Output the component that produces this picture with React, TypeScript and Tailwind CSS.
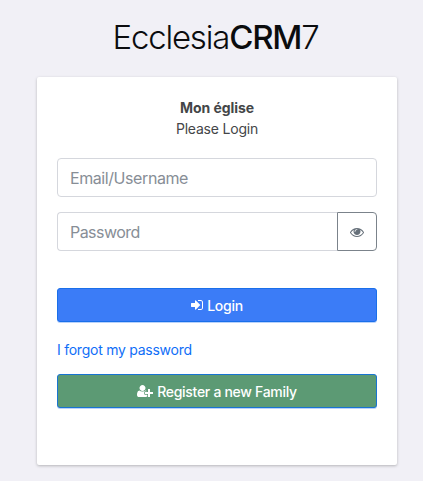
import React from "react";

function SignInIcon() {
  return (
    <svg viewBox="0 0 1536 1792" className="h-[14px] w-[12px] shrink-0" fill="currentColor" aria-hidden="true">
      <path d="M1184 896q0 26-19 45l-544 544q-19 19-45 19t-45-19-19-45v-288h-448q-26 0-45-19t-19-45v-384q0-26 19-45t45-19h448v-288q0-26 19-45t45-19 45 19l544 544q19 19 19 45zm352-352v704q0 119-84.5 203.5t-203.5 84.5h-320q-13 0-22.5-9.5t-9.5-22.5q0-4-1-20t-.5-26.5 3-23.5 10-19.5 20.5-6.5h320q66 0 113-47t47-113v-704q0-66-47-113t-113-47h-312l-11.5-1-11.5-3-8-5.5-7-9-2-13.5q0-4-1-20t-.5-26.5 3-23.5 10-19.5 20.5-6.5h320q119 0 203.5 84.5t84.5 203.5z" />
    </svg>
  );
}

function EyeIcon() {
  return (
    <svg viewBox="0 0 1792 1792" className="h-[14px] w-[14px]" fill="currentColor" aria-hidden="true">
      <path d="M1664 960q-152-236-381-353 61 104 61 225 0 185-131.5 316.5t-316.5 131.5-316.5-131.5-131.5-316.5q0-121 61-225-229 117-381 353 133 205 333.5 326.5t434.5 121.5 434.5-121.5 333.5-326.5zm-720-384q0-20-14-34t-34-14q-125 0-214.5 89.5t-89.5 214.5q0 20 14 34t34 14 34-14 14-34q0-86 61-147t147-61q20 0 34-14t14-34zm848 384q0 34-20 69-140 230-376.5 368.5t-499.5 138.5-499.5-139-376.5-368q-20-35-20-69t20-69q140-229 376.5-368t499.5-139 499.5 139 376.5 368q20 35 20 69z" />
    </svg>
  );
}

function UserPlusIcon() {
  return (
    <svg viewBox="0 0 2048 1792" className="h-[14px] w-[16px] shrink-0" fill="currentColor" aria-hidden="true">
      <path d="M704 896q-159 0-271.5-112.5t-112.5-271.5 112.5-271.5 271.5-112.5 271.5 112.5 112.5 271.5-112.5 271.5-271.5 112.5zm960 128h352q13 0 22.5 9.5t9.5 22.5v192q0 13-9.5 22.5t-22.5 9.5h-352v352q0 13-9.5 22.5t-22.5 9.5h-192q-13 0-22.5-9.5t-9.5-22.5v-352h-352q-13 0-22.5-9.5t-9.5-22.5v-192q0-13 9.5-22.5t22.5-9.5h352v-352q0-13 9.5-22.5t22.5-9.5h192q13 0 22.5 9.5t9.5 22.5v352zm-736 224q0 52 38 90t90 38h256v238q-68 50-171 50h-874q-121 0-194-69t-73-190q0-53 3.5-103.5t14-109 26.5-108.5 43-97.5 62-81 85.5-53.5 111.5-20q19 0 39 17 79 61 154.5 91.5t164.5 30.5 164.5-30.5 154.5-91.5q20-17 39-17 132 0 217 96h-223q-52 0-90 38t-38 90v192z" />
    </svg>
  );
}

export default function App() {
  return (
    <div className="flex min-h-screen flex-col bg-[#f1f0f6] pl-[37px] pr-[26px] pt-[13px] font-['Inter',sans-serif] text-[#212529]">
      <h1 className="h-[50px] whitespace-nowrap pr-[3px] text-center text-[33px] font-light leading-[48px] tracking-[-1.2px] text-[#0b0c0e]">
        Ecclesia<b className="font-medium">CRM</b>7
      </h1>
      <main className="mt-[14px] flex h-[388px] flex-col rounded-[2px] bg-white px-5 pt-5 shadow-[0_1px_3px_rgba(0,0,0,0.25)]">
        <p className="text-center text-[14px] leading-[21px] tracking-[-0.2px] text-[#444648]">
          <b className="font-bold tracking-[-0.05px]">Mon église</b>
          <br />
          Please Login
        </p>
        <input
          placeholder="Email/Username"
          className="mt-[19px] h-[39px] w-full rounded-[4px] border border-[#d5d7dd] px-3 text-[16px] tracking-[-0.42px] outline-none placeholder:text-[#878e96]"
        />
        <div className="mt-[15px] flex h-[39px]">
          <input
            placeholder="Password"
            className="min-w-0 flex-1 rounded-l-[4px] border border-r-0 border-[#d5d7dd] px-3 text-[16px] tracking-[-0.55px] outline-none placeholder:text-[#878e96]"
          />
          <button className="flex w-10 items-center justify-center rounded-r-[4px] border border-[#7b838b] text-[#66707a]">
            <EyeIcon />
          </button>
        </div>
        <button className="mt-[37px] flex h-[34px] items-center justify-center gap-1 rounded-[3px] border border-[#1a6fea] bg-[#3b7cf7] text-[14px] font-medium tracking-[-0.25px] text-white shadow-[0_1px_0_#b9d2fb]">
          <SignInIcon />
          Login
        </button>
        <a href="#" className="mt-[17px] self-start text-[14px] leading-[21px] tracking-[-0.25px] text-[#0f6ef7]">
          I forgot my password
        </a>
        <button className="mt-[14px] flex h-[34px] items-center justify-center gap-1 rounded-[3px] border border-[#1874d2] bg-[#5c9a74] text-[14px] font-medium tracking-[-0.3px] text-white shadow-[0_1px_0_#b9d2fb]">
          <UserPlusIcon />
          Register a new Family
        </button>
      </main>
    </div>
  );
}
